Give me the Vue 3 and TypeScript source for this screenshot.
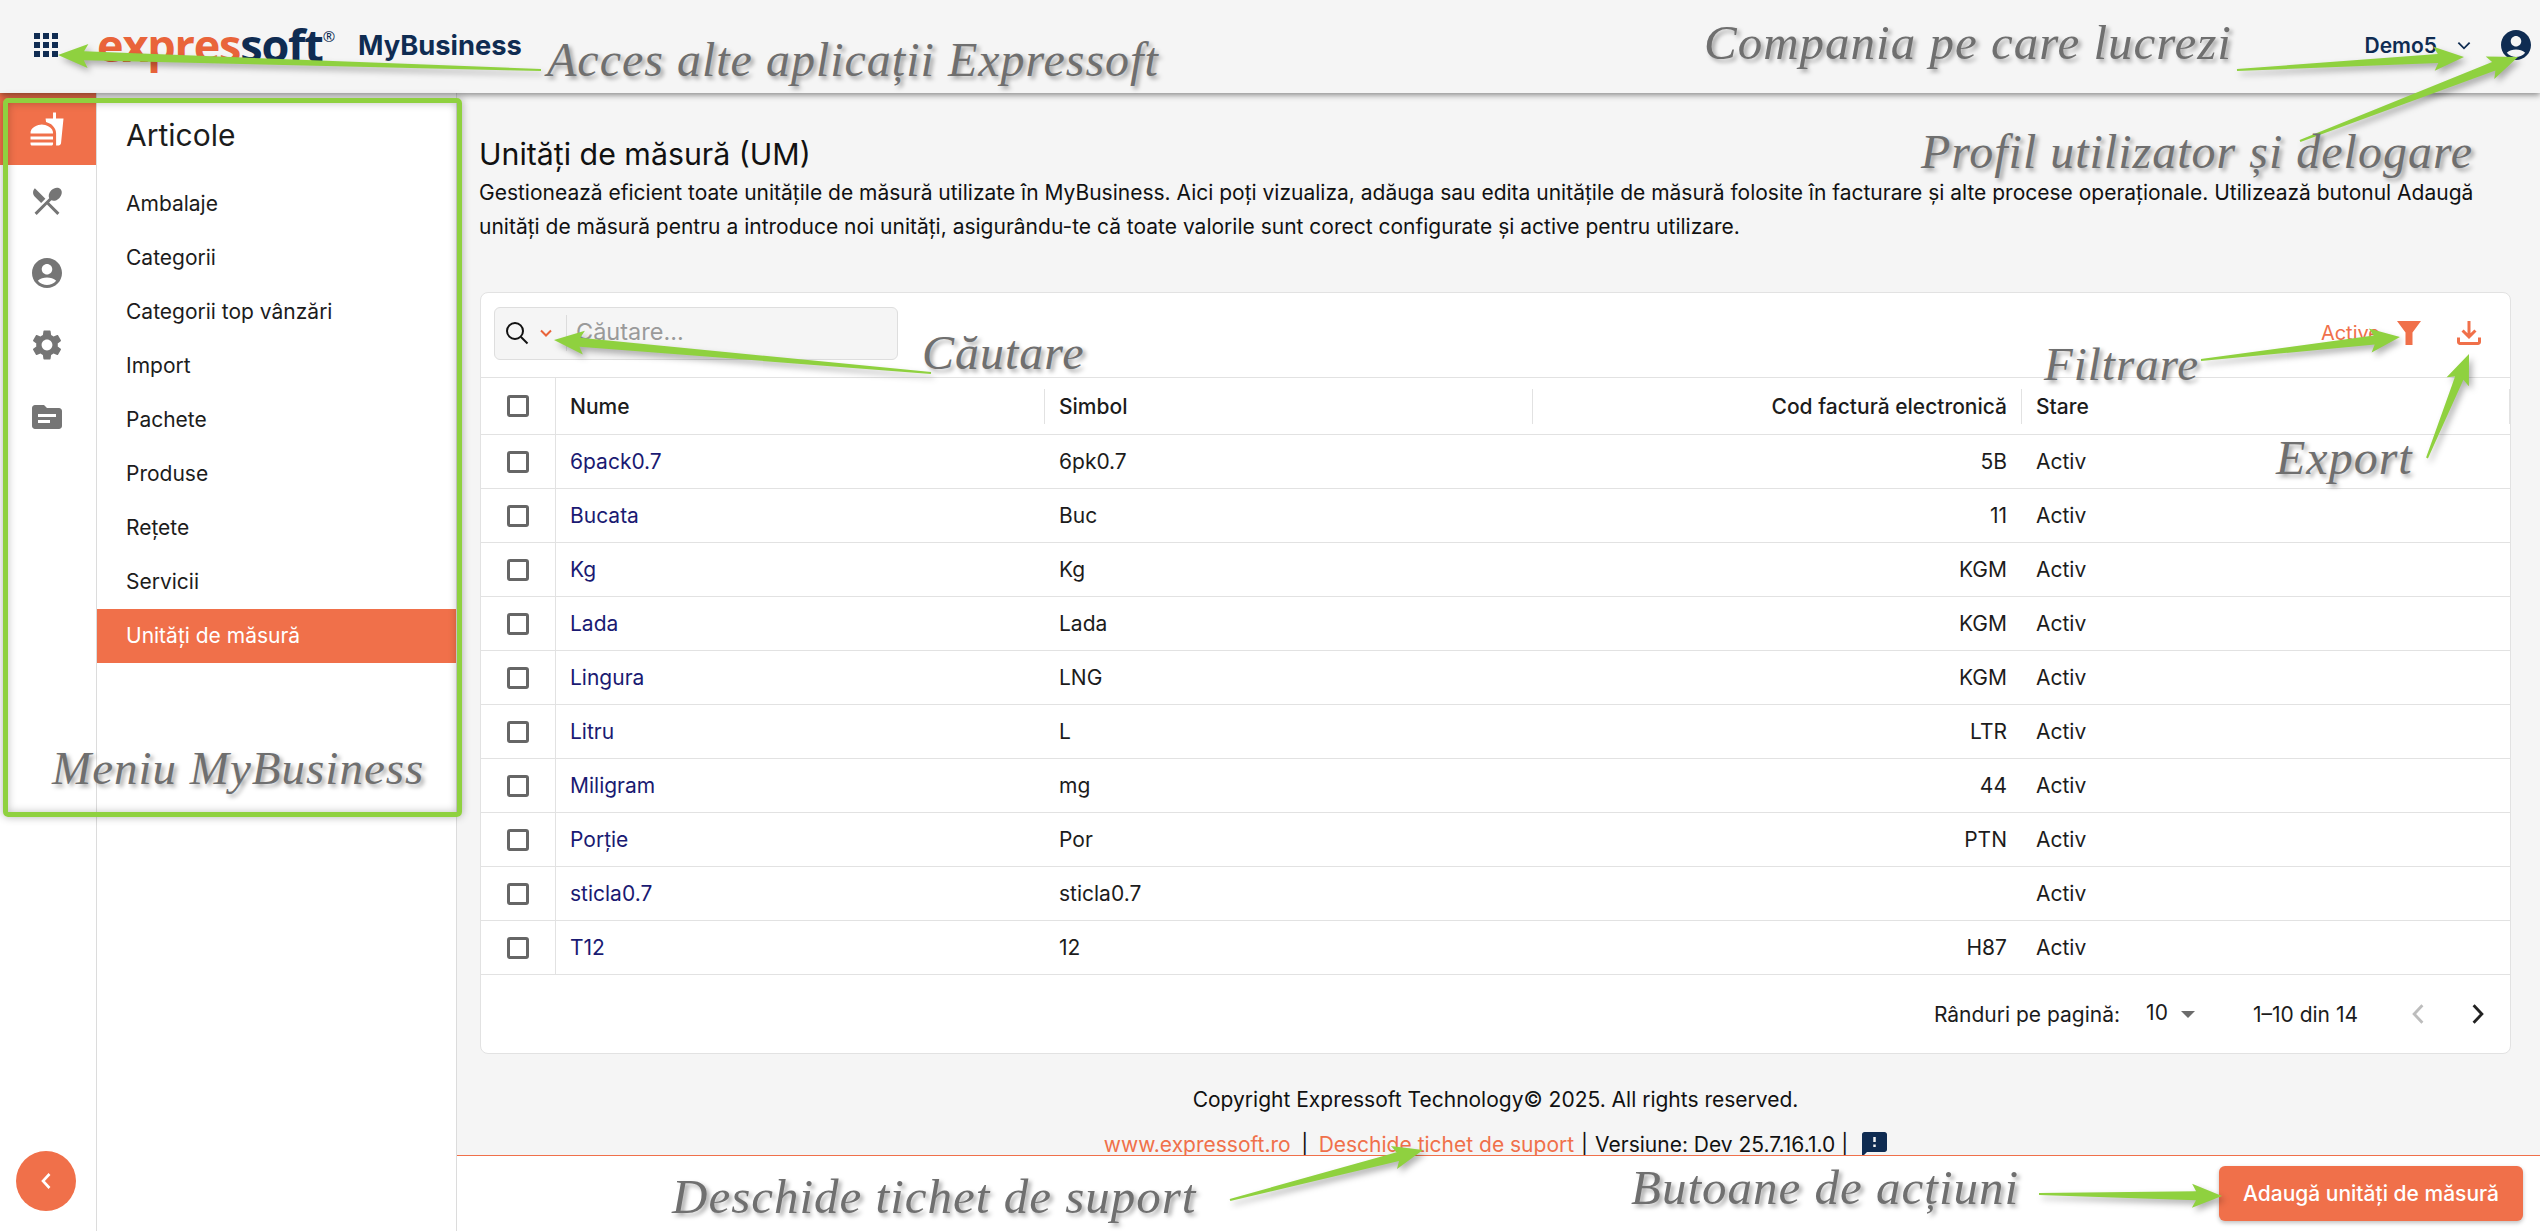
<script setup lang="ts">
const navItems = ['Ambalaje', 'Categorii', 'Categorii top vânzări', 'Import', 'Pachete', 'Produse', 'Rețete', 'Servicii', 'Unități de măsură']

const railIcons = [
  'M18.06 22.99h1.66c.84 0 1.53-.64 1.63-1.46L23 5.05h-5V1h-1.97v4.05h-4.97l.3 2.34c1.71.47 3.31 1.32 4.27 2.26 1.44 1.42 2.43 2.89 2.43 5.29v8.05zM1 21.99V21h15.03v.99c0 .55-.45 1-1.01 1H2.01c-.56 0-1.01-.45-1.01-1zm15.03-7c.5-4-5.08-6-7.5-6-2.42 0-8 2-7.5 6h15zM1.02 17h15v2h-15z',
  'm8.1 13.34 2.83-2.83L3.91 3.5c-1.56 1.56-1.56 4.09 0 5.66l4.19 4.18zm6.78-1.81c1.53.71 3.68.21 5.27-1.38 1.91-1.91 2.28-4.65.81-6.12-1.46-1.46-4.2-1.1-6.12.81-1.59 1.59-2.09 3.74-1.38 5.27L3.7 19.87l1.41 1.41L12 14.41l6.88 6.88 1.41-1.41L13.41 13l1.47-1.47z',
  'M12 2C6.48 2 2 6.48 2 12s4.48 10 10 10 10-4.48 10-10S17.52 2 12 2zm0 4c1.93 0 3.5 1.57 3.5 3.5S13.93 13 12 13s-3.5-1.57-3.5-3.5S10.07 6 12 6zm0 14c-2.03 0-4.43-.82-6.14-2.88C7.55 15.8 9.68 15 12 15s4.45.8 6.14 2.12C16.43 19.18 14.03 20 12 20z',
  'M19.14 12.94c.04-.3.06-.61.06-.94 0-.32-.02-.64-.07-.94l2.03-1.58c.18-.14.23-.41.12-.61l-1.92-3.32c-.12-.22-.37-.29-.59-.22l-2.39.96c-.5-.38-1.03-.7-1.62-.94l-.36-2.54c-.04-.24-.24-.41-.48-.41h-3.84c-.24 0-.43.17-.47.41l-.36 2.54c-.59.24-1.13.57-1.62.94l-2.39-.96c-.22-.08-.47 0-.59.22L2.74 8.87c-.12.21-.08.47.12.61l2.03 1.58c-.05.3-.09.63-.09.94s.02.64.07.94l-2.03 1.58c-.18.14-.23.41-.12.61l1.92 3.32c.12.22.37.29.59.22l2.39-.96c.5.38 1.03.7 1.62.94l.36 2.54c.05.24.24.41.48.41h3.84c.24 0 .44-.17.47-.41l.36-2.54c.59-.24 1.13-.56 1.62-.94l2.39.96c.22.08.47 0 .59-.22l1.92-3.32c.12-.22.07-.47-.12-.61l-2.01-1.58zM12 15.6c-1.98 0-3.6-1.62-3.6-3.6s1.62-3.6 3.6-3.6 3.6 1.62 3.6 3.6-1.62 3.6-3.6 3.6z',
  'M20 6h-8l-2-2H4c-1.1 0-1.99.9-1.99 2L2 18c0 1.1.9 2 2 2h16c1.1 0 2-.9 2-2V8c0-1.1-.9-2-2-2zm-6 10H6v-2h8v2zm4-4H6v-2h12v2z'
]

const rows = [
  { name: '6pack0.7', symbol: '6pk0.7', code: '5B' },
  { name: 'Bucata', symbol: 'Buc', code: '11' },
  { name: 'Kg', symbol: 'Kg', code: 'KGM' },
  { name: 'Lada', symbol: 'Lada', code: 'KGM' },
  { name: 'Lingura', symbol: 'LNG', code: 'KGM' },
  { name: 'Litru', symbol: 'L', code: 'LTR' },
  { name: 'Miligram', symbol: 'mg', code: '44' },
  { name: 'Porție', symbol: 'Por', code: 'PTN' },
  { name: 'sticla0.7', symbol: 'sticla0.7', code: '' },
  { name: 'T12', symbol: '12', code: 'H87' }
]

// callouts drawn on top of the screenshot
const notes = [
  { text: 'Acces alte aplicații Expressoft', x: 547, y: 60, size: 48 },
  { text: 'Compania pe care lucrezi', x: 1704, y: 42, size: 49 },
  { text: 'Profil utilizator și delogare', x: 1921, y: 152, size: 48 },
  { text: 'Căutare', x: 922, y: 353, size: 48 },
  { text: 'Filtrare', x: 2044, y: 364, size: 47 },
  { text: 'Export', x: 2276, y: 458, size: 48 },
  { text: 'Meniu MyBusiness', x: 52, y: 768, size: 47 },
  { text: 'Deschide tichet de suport', x: 672, y: 1196, size: 49 },
  { text: 'Butoane de acțiuni', x: 1631, y: 1187, size: 49 }
]

const arrow = (x1: number, y1: number, x2: number, y2: number) => {
  const len = Math.hypot(x2 - x1, y2 - y1)
  const ux = (x2 - x1) / len
  const uy = (y2 - y1) / len
  const at = (along: number, side: number) =>
    `${(x2 - ux * along - uy * side).toFixed(1)},${(y2 - uy * along + ux * side).toFixed(1)}`
  return [at(0, 0), at(30, 12), at(26, 4.5), at(len, 1), at(len, -1), at(26, -4.5), at(30, -12)].join(' ')
}

const arrows = [
  arrow(541, 70, 58, 55),
  arrow(2237, 70, 2464, 57),
  arrow(2300, 141, 2518, 57),
  arrow(931, 373, 554, 340),
  arrow(2201, 360, 2400, 337),
  arrow(2427, 458, 2469, 354),
  arrow(1230, 1200, 1423, 1150),
  arrow(2039, 1194, 2222, 1196)
]
</script>

<template>
  <div class="app">
    <header class="topbar">
      <svg class="apps" viewBox="4 4 16 16"><path d="M4 8h4V4H4v4zm6 12h4v-4h-4v4zm-6 0h4v-4H4v4zm0-6h4v-4H4v4zm6 0h4v-4h-4v4zm6-10v4h4V4h-4zm-6 4h4V4h-4v4zm6 6h4v-4h-4v4zm0 6h4v-4h-4v4z" /></svg>
      <div class="logo"><span class="logo-a">expres</span><span class="logo-b">soft</span><sup>®</sup></div>
      <div class="product">MyBusiness</div>
      <div class="spacer"></div>
      <div class="company">Demo5</div>
      <svg class="company-arrow" viewBox="0 0 12 8"><path d="M1 1.5l5 5 5-5" /></svg>
      <svg class="avatar" viewBox="2 2 20 20"><path d="M12 2C6.48 2 2 6.48 2 12s4.48 10 10 10 10-4.48 10-10S17.52 2 12 2zm0 4c1.93 0 3.5 1.57 3.5 3.5S13.93 13 12 13s-3.5-1.57-3.5-3.5S10.07 6 12 6zm0 14c-2.03 0-4.43-.82-6.14-2.88C7.55 15.8 9.68 15 12 15s4.45.8 6.14 2.12C16.43 19.18 14.03 20 12 20z" /></svg>
    </header>

    <div class="body">
      <aside class="rail">
        <div v-for="(d, i) in railIcons" :key="i" class="rail-item" :class="{ active: i === 0 }">
          <svg viewBox="0 0 24 24"><path :d="d" /></svg>
        </div>
        <button class="collapse">
          <svg viewBox="0 0 12 20"><path d="M9.5 3L3 10l6.500 7" /></svg>
        </button>
      </aside>

      <nav class="subnav">
        <h2>Articole</h2>
        <a v-for="item in navItems" :key="item" class="subnav-item" :class="{ active: item === 'Unități de măsură' }">{{ item }}</a>
      </nav>

      <main class="main">
        <div class="content">
          <h1>Unități de măsură (UM)</h1>
          <p class="intro">Gestionează eficient toate unitățile de măsură utilizate în MyBusiness. Aici poți vizualiza, adăuga sau edita unitățile de măsură folosite în facturare și alte procese operaționale. Utilizează butonul Adaugă unități de măsură pentru a introduce noi unități, asigurându-te că toate valorile sunt corect configurate și active pentru utilizare.</p>

          <section class="card">
            <div class="toolbar">
              <div class="search">
                <svg class="search-icon" viewBox="0 0 24 24"><circle cx="10" cy="10" r="8" /><path d="M16 16l6.500 6.500" /></svg>
                <svg class="search-arrow" viewBox="0 0 12 8"><path d="M1 1.500l5 5 5-5" /></svg>
                <span class="search-text">Căutare...</span>
              </div>
              <div class="spacer"></div>
              <span class="active-label">Active</span>
              <svg class="tool-icon filter" viewBox="0 0 24 24"><path d="M0 0h24l-8.500 11.500V24h-7V11.500z" /></svg>
              <svg class="tool-icon" viewBox="4 4 16 16"><path d="M18 15v3H6v-3H4v3c0 1.100.9 2 2 2h12c1.100 0 2-.9 2-2v-3h-2zm-1-4-1.410-1.410L13 12.170V4h-2v8.170L8.410 9.590 7 11l5 5 5-5z" /></svg>
            </div>

            <div class="row head">
              <div class="check"><span class="box"></span></div>
              <div class="cell">Nume</div>
              <div class="cell">Simbol</div>
              <div class="cell right">Cod factură electronică</div>
              <div class="cell">Stare</div>
            </div>
            <div v-for="r in rows" :key="r.name" class="row">
              <div class="check"><span class="box"></span></div>
              <div class="cell link">{{ r.name }}</div>
              <div class="cell">{{ r.symbol }}</div>
              <div class="cell right">{{ r.code }}</div>
              <div class="cell">Activ</div>
            </div>

            <div class="pager">
              <span>Rânduri pe pagină:</span>
              <span class="page-size">10</span>
              <span class="caret"></span>
              <span class="range">1–10 din 14</span>
              <svg class="page-btn off" viewBox="0 0 12 20"><path d="M10 2L2.500 10l7.500 8" /></svg>
              <svg class="page-btn" viewBox="0 0 12 20"><path d="M2 2l7.500 8L2 18" /></svg>
            </div>
          </section>

          <p class="copyright">Copyright Expressoft Technology© 2025. All rights reserved.</p>
          <div class="links">
            <a>www.expressoft.ro</a><span class="bar">|</span>
            <a>Deschide tichet de suport</a><span class="bar tight">|</span>
            <span>Versiune: Dev 25.7.16.1.0</span><span class="bar last">|</span>
            <svg class="feedback" viewBox="2 2 20 20"><path d="M20 2H4c-1.100 0-1.990.9-1.990 2L2 22l4-4h14c1.100 0 2-.9 2-2V4c0-1.100-.9-2-2-2zm-7 12h-2v-2h2v2zm0-4h-2V6h2v4z" /></svg>
          </div>
        </div>

        <footer class="actions">
          <button class="primary">Adaugă unități de măsură</button>
        </footer>
      </main>
    </div>

    <div class="menu-frame"></div>
    <svg class="arrows" viewBox="0 0 2540 1231">
      <polygon v-for="(p, i) in arrows" :key="i" :points="p" />
    </svg>
    <span v-for="n in notes" :key="n.text" class="note" :style="{ left: n.x + 'px', top: n.y + 'px', fontSize: n.size + 'px' }">{{ n.text }}</span>
  </div>
</template>

<style>
html, body {
  margin: 0;
  background: #fff;
}
</style>

<style scoped>
.app {
  position: relative;
  display: flex;
  flex-direction: column;
  height: 1231px;
  overflow: hidden;
  font-family: Inter, "Liberation Sans", sans-serif;
  font-size: 21px;
  color: #1c1c1c;
}

.spacer {
  flex: 1;
}

.topbar {
  position: relative;
  z-index: 2;
  display: flex;
  align-items: center;
  flex: 0 0 93px;
  padding: 0 7px 3px 34px;
  box-sizing: border-box;
  background: #f5f5f5;
  box-shadow: 0 2px 6px rgba(0, 0, 0, 0.45);
}

.apps {
  width: 24px;
  height: 24px;
  fill: #0f2c52;
}

.logo {
  margin-left: 39px;
  font-family: "Open Sans", sans-serif;
  font-size: 45px;
  font-weight: 700;
  letter-spacing: -1.2px;
  line-height: 50px;
}

.logo-a {
  color: #e9643a;
}

.logo-b {
  color: #0f2c52;
}

.logo sup {
  font-size: 15px;
  font-weight: 400;
  color: #0f2c52;
  vertical-align: 20px;
  line-height: 0;
}

.product {
  margin-left: 24px;
  font-size: 27.300px;
  font-weight: 700;
  color: #0f2c52;
}

.company {
  font-weight: 600;
  color: #0f2c52;
}

.company-arrow {
  width: 14px;
  height: 9px;
  margin: 0 30px 0 20px;
  fill: none;
  stroke: #0f2c52;
  stroke-width: 1.6;
}

.avatar {
  width: 30px;
  height: 30px;
  margin-right: 2px;
  fill: #0f2c52;
}

.body {
  display: flex;
  flex: 1;
  min-height: 0;
}

.rail {
  display: flex;
  flex-direction: column;
  flex: 0 0 96px;
  border-right: 1px solid #dcdcdc;
}

.rail-item {
  display: flex;
  align-items: center;
  justify-content: center;
  height: 72px;
  padding-right: 3px;
  fill: #757575;
}

.rail-item svg {
  width: 36px;
  height: 36px;
}

.rail-item.active {
  background: #f0704a;
  fill: #fff;
}

.collapse {
  display: flex;
  align-items: center;
  justify-content: center;
  width: 60px;
  height: 60px;
  margin: auto 0 20px 16px;
  padding: 0;
  border: 0;
  border-radius: 50%;
  background: #f0704a;
}

.collapse svg {
  width: 12px;
  height: 20px;
  fill: none;
  stroke: #fff;
  stroke-width: 2.6;
}

.subnav {
  flex: 0 0 359px;
  border-right: 1px solid #dcdcdc;
}

.subnav h2 {
  height: 84px;
  box-sizing: border-box;
  margin: 0;
  padding: 20px 29px 0;
  font-size: 30px;
  font-weight: 400;
  line-height: 45px;
}

.subnav-item {
  display: block;
  padding-left: 29px;
  line-height: 54px;
  height: 54px;
}

.subnav-item.active {
  background: #f0704a;
  color: #fff;
}

.main {
  display: flex;
  flex-direction: column;
  flex: 1;
  min-width: 0;
}

.content {
  flex: 1;
  min-height: 0;
  overflow: hidden;
  padding: 41px 29px 0 23px;
  background: #f5f5f5;
}

h1 {
  margin: 0 0 0 -1px;
  font-size: 30.300px;
  font-weight: 400;
  line-height: 40px;
  color: #111;
}

.intro {
  margin: 2px 0 48px -1px;
  line-height: 34px;
  color: #111;
}

.card {
  border: 1px solid #e2e2e2;
  border-radius: 8px;
  background: #fff;
}

.toolbar {
  display: flex;
  align-items: center;
  height: 84px;
  box-sizing: border-box;
  padding: 0 29px 4px 13px;
}

.search {
  display: flex;
  align-items: center;
  width: 404px;
  height: 53px;
  box-sizing: border-box;
  padding-left: 10px;
  border: 1px solid #dedede;
  border-radius: 6px;
  background: #f5f5f5;
}

.search-icon {
  width: 24px;
  height: 24px;
  fill: none;
  stroke: #111;
  stroke-width: 2;
}

.search-arrow {
  width: 12px;
  height: 8px;
  margin-left: 11px;
  fill: none;
  stroke: #e9643a;
  stroke-width: 2;
}

.search-text {
  height: 36px;
  margin-left: 14px;
  padding-left: 9px;
  border-left: 1px solid #dcdcdc;
  font-size: 23.500px;
  line-height: 34px;
  color: #9a9a9a;
}

.active-label {
  margin-right: 17px;
  font-size: 20px;
  color: #f0704a;
}

.tool-icon {
  width: 24px;
  height: 24px;
  fill: #f0704a;
}

.tool-icon.filter {
  margin-right: 36px;
}

.row {
  display: grid;
  grid-template-columns: 75px 489px 488px 489px 1fr;
  height: 54px;
  box-sizing: border-box;
  border-top: 1px solid #e2e2e2;
}

.row.head {
  height: 57px;
  font-weight: 500;
}

.check {
  display: flex;
  align-items: center;
  justify-content: center;
  border-right: 1px solid #e2e2e2;
}

.box {
  width: 22px;
  height: 22px;
  box-sizing: border-box;
  border: 3px solid #666;
  border-radius: 3px;
}

.cell {
  position: relative;
  display: flex;
  align-items: center;
  padding: 0 15px 0 14px;
}

.cell.right {
  justify-content: flex-end;
}

.cell.link {
  color: #1a1a72;
}

.head .cell::after {
  content: "";
  position: absolute;
  top: 11px;
  right: 0;
  width: 1px;
  height: 35px;
  background: #e2e2e2;
}

.pager {
  display: flex;
  align-items: center;
  justify-content: flex-end;
  height: 78px;
  padding-right: 25px;
  border-top: 1px solid #e2e2e2;
}

.page-size {
  position: relative;
  top: -2px;
  margin-left: 26px;
}

.caret {
  width: 0;
  height: 0;
  margin-left: 13px;
  border-left: 7px solid transparent;
  border-right: 7px solid transparent;
  border-top: 7px solid #6c6c6c;
}

.range {
  margin: 0 53px 0 58px;
}

.page-btn {
  width: 14px;
  height: 22px;
  fill: none;
  stroke: #222;
  stroke-width: 2.6;
}

.page-btn.off {
  margin-right: 46px;
  stroke: #bdbdbd;
}

.copyright {
  margin: 31px 0 0;
  line-height: 30px;
  text-align: center;
  color: #111;
}

.links {
  display: flex;
  align-items: center;
  justify-content: center;
  height: 30px;
  margin-top: 14px;
  color: #111;
}

.links a {
  color: #f0704a;
}

.bar {
  margin: 0 10.500px;
}

.bar.tight {
  margin: 0 7px;
}

.bar.last {
  margin: 0 9px 0 6px;
}

.feedback {
  width: 25px;
  height: 25px;
  margin-left: 5px;
  fill: #0f2c52;
}

.actions {
  display: flex;
  justify-content: flex-end;
  align-items: center;
  flex: 0 0 76px;
  box-sizing: border-box;
  padding-right: 17px;
  border-top: 1px solid #f0704a;
  background: #fff;
}

.primary {
  width: 304px;
  height: 55px;
  border: 0;
  border-radius: 6px;
  background: #f0704a;
  box-shadow: 0 2px 4px rgba(0, 0, 0, 0.25);
  color: #fff;
  font-family: inherit;
  font-size: 21px;
  font-weight: 500;
}

.menu-frame {
  position: absolute;
  left: 3px;
  top: 98px;
  width: 449px;
  height: 709px;
  border: 5px solid #8fd13f;
  border-radius: 5px;
  box-shadow: 0 0 8px rgba(0, 0, 0, 0.3), inset 0 0 8px rgba(0, 0, 0, 0.25);
  z-index: 3;
}

.arrows {
  position: absolute;
  inset: 0;
  width: 2540px;
  height: 1231px;
  z-index: 3;
  pointer-events: none;
  fill: #8fd13f;
  filter: drop-shadow(3px 4px 3px rgba(0, 0, 0, 0.3));
}

.note {
  position: absolute;
  z-index: 4;
  transform: translateY(-50%);
  font-family: "Liberation Serif", serif;
  font-style: italic;
  letter-spacing: 1px;
  line-height: 1;
  white-space: nowrap;
  color: #6f6f6f;
  text-shadow: 3px 3px 4px rgba(0, 0, 0, 0.35);
}
</style>
